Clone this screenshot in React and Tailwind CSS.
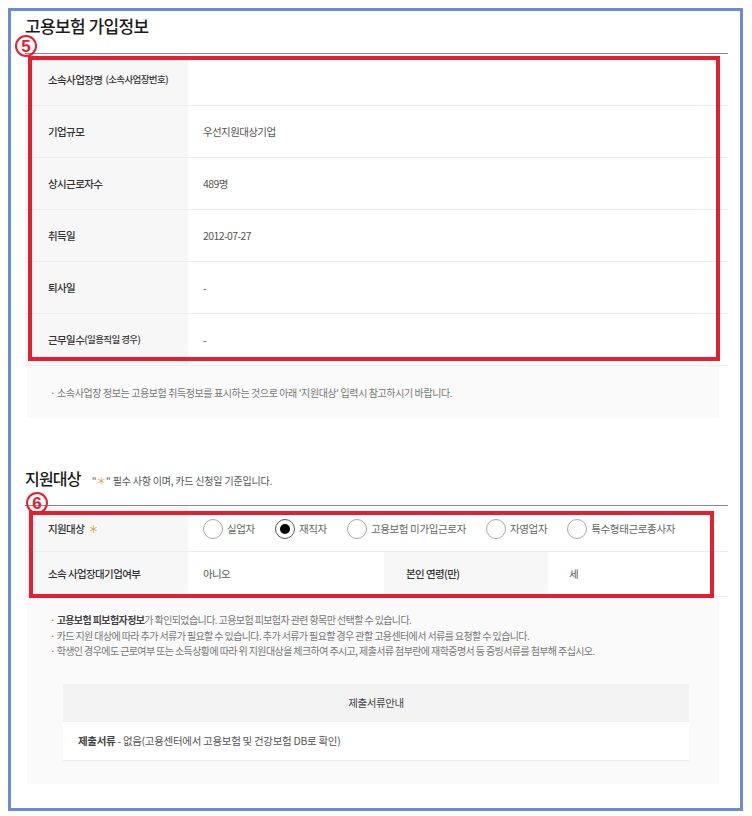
import React from 'react';

const KR = { fontFamily: '"Noto Sans CJK KR", "Noto Sans", sans-serif' };

const INFO_ROWS = [
  { label: '소속사업장명', sub: '(소속사업장번호)', value: '' },
  { label: '기업규모', value: '우선지원대상기업' },
  { label: '상시근로자수', value: '489명' },
  { label: '취득일', value: '2012-07-27' },
  { label: '퇴사일', value: '-' },
  { label: '근무일수', sub: '(일용직일 경우)', value: '-', tight: true },
];

const TARGETS = [
  { label: '실업자' },
  { label: '재직자', checked: true },
  { label: '고용보험 미가입근로자' },
  { label: '자영업자' },
  { label: '특수형태근로종사자' },
];

function Radio({ label, checked }) {
  return (
    <label className="flex items-center gap-[4px]">
      <span
        className={`flex h-[20px] w-[20px] items-center justify-center rounded-full border bg-white ${
          checked ? 'border-[#555]' : 'border-[#a8a8a8]'
        }`}
      >
        {checked && <span className="h-[10px] w-[10px] rounded-full bg-black" />}
      </span>
      <span className="text-[10.5px] tracking-[-0.35px] text-[#666]">{label}</span>
    </label>
  );
}

function Circled({ n, className }) {
  return (
    <span
      className={`absolute flex items-center justify-center rounded-full border-2 border-[#e3202f] text-[17px] font-bold leading-none text-[#e3202f] ${className}`}
      style={{ fontFamily: '"Liberation Sans", Arial, sans-serif' }}
    >
      {n}
    </span>
  );
}

export default function App() {
  return (
    <div className="min-h-[816px] bg-white pl-[8px] pt-[8px]" style={KR}>
      <div className="relative h-[803px] w-[735px] border-[3px] border-[#6b8dd7] pl-[14px] pr-[12px] pt-[1px]">
        {/* 고용보험 가입정보 */}
        <div className="border-b border-[#8a8a8a] pb-[13px]">
          <h2 className="text-[17px] font-medium leading-[28px] tracking-[-0.6px] text-[#1a1a1a]">고용보험 가입정보</h2>
        </div>

        <div>
          {INFO_ROWS.map((r) => (
            <div key={r.label} className="flex h-[52px] border-b border-[#ececec]">
              <div className="flex w-[163px] shrink-0 items-center bg-[#f7f7f8] pl-[23px] text-[10.5px] font-medium tracking-[-0.6px] text-[#333]">
                {r.label}
                {r.sub && (
                  <span className={`text-[9.5px] tracking-[-0.6px] ${r.tight ? '' : 'ml-[3px]'}`}>{r.sub}</span>
                )}
              </div>
              <div className="flex flex-1 items-center pl-[15px] text-[10.5px] tracking-[-0.6px] text-[#555]">
                {r.value}
              </div>
            </div>
          ))}
        </div>

        <div className="ml-[2px] mr-[9px] flex h-[52px] items-center bg-[#fafafa] pl-[23px] text-[10px] tracking-[-0.4px] text-[#777]">
          · 소속사업장 정보는 고용보험 취득정보를 표시하는 것으로 아래 '지원대상' 입력시 참고하시기 바랍니다.
        </div>

        {/* 지원대상 */}
        <div className="mt-[46px] flex items-baseline border-b border-[#8a8a8a] pb-[13px]">
          <h2 className="text-[16px] font-medium leading-[28px] tracking-[-0.8px] text-[#1a1a1a]">지원대상</h2>
          <p className="ml-[11px] text-[10px] tracking-[-0.2px] text-[#555]">
            "<span className="text-[#e9a23b]">＊</span>" 필수 사항 이며, 카드 신청일 기준입니다.
          </p>
        </div>

        <div className="flex h-[46px] border-b border-[#ececec]">
          <div className="flex w-[163px] shrink-0 items-center bg-[#f7f7f8] pl-[23px] text-[10.5px] font-medium tracking-[-0.6px] text-[#333]">
            지원대상 <span className="ml-[4px] text-[#e9a23b]">＊</span>
          </div>
          <div className="flex flex-1 items-center gap-[20px] pl-[15px]">
            {TARGETS.map((t) => (
              <Radio key={t.label} {...t} />
            ))}
          </div>
        </div>
        <div className="flex h-[45px] border-b border-[#ececec]">
          <div className="flex w-[163px] shrink-0 items-center bg-[#f7f7f8] pl-[23px] text-[10.5px] font-medium tracking-[-0.6px] text-[#333]">
            소속 사업장대기업여부
          </div>
          <div className="flex w-[196px] items-center pl-[15px] text-[10.5px] tracking-[-0.6px] text-[#555]">아니오</div>
          <div className="flex w-[164px] items-center bg-[#f7f7f8] pl-[22px] text-[10.5px] font-medium tracking-[-0.6px] text-[#333]">
            본인 연령(만)
          </div>
          <div className="flex flex-1 items-center pl-[21px] text-[10.5px] text-[#555]">세</div>
        </div>

        <div className="ml-[2px] mr-[9px] bg-[#fafafa] pb-[23px] pt-[15px]">
          <ul className="pl-[23px] text-[10px] leading-[15.5px] tracking-[-0.6px] text-[#777]">
            <li>
              · <b className="font-bold text-[#444]">고용보험 피보험자정보</b>가 확인되었습니다. 고용보험 피보험자 관련 항목만 선택할 수 있습니다.
            </li>
            <li>· 카드 지원 대상에 따라 추가 서류가 필요할 수 있습니다. 추가 서류가 필요할 경우 관할 고용센터에서 서류를 요청할 수 있습니다.</li>
            <li>· 학생인 경우에도 근로여부 또는 소득상황에 따라 위 지원대상을 체크하여 주시고, 제출서류 첨부란에 재학증명서 등 증빙서류를 첨부해 주십시오.</li>
          </ul>

          <div className="ml-[36px] mr-[30px] mt-[25px]">
            <div className="flex h-[38px] items-center justify-center bg-[#f3f3f3] text-[10.5px] tracking-[-0.4px] text-[#444]">
              제출서류안내
            </div>
            <div className="flex h-[39px] items-center border-b border-[#ededed] bg-white pl-[15px] text-[10.5px] tracking-[-0.3px] text-[#555]">
              <b className="font-bold text-[#444]">제출서류</b>&nbsp;- 없음(고용센터에서 고용보험 및 건강보험 DB로 확인)
            </div>
          </div>
        </div>

        {/* annotation overlays */}
        <div className="pointer-events-none absolute left-[17px] top-[45px] h-[305px] w-[692px] border-[4px] border-[#e3202f]" />
        <div className="pointer-events-none absolute left-[18px] top-[500px] h-[87px] w-[685px] border-[4px] border-[#e3202f]" />
        <Circled n="5" className="left-[4px] top-[24px] h-[22px] w-[22px]" />
        <Circled n="6" className="left-[15px] top-[481px] h-[22px] w-[22px]" />
      </div>
    </div>
  );
}
